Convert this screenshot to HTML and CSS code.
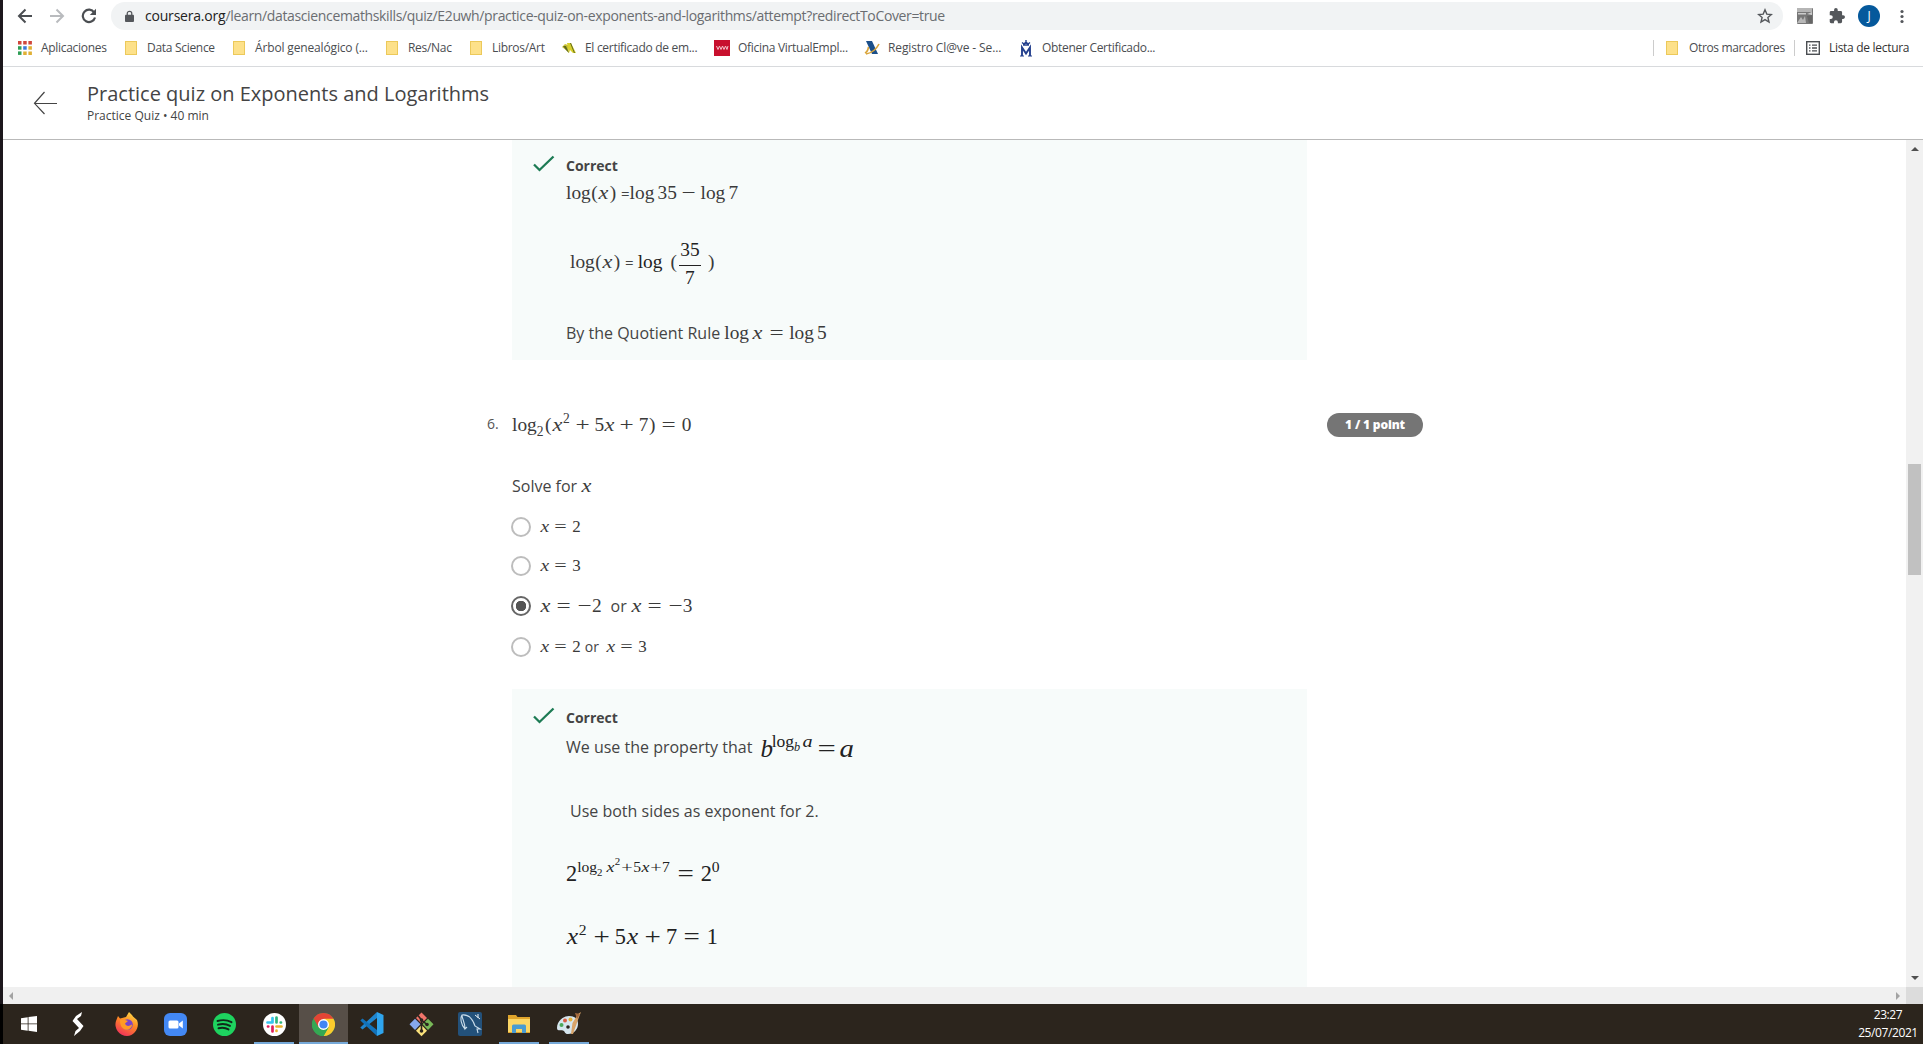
FILE: index.html
```html
<!DOCTYPE html>
<html lang="es">
<head>
<meta charset="utf-8">
<title>Practice quiz on Exponents and Logarithms</title>
<link rel="stylesheet" href="styles.css">
</head>
<body>
<div class="screen">
  <div class="browser">
    <div class="toolbar">
      <div class="nav">
        <svg width="16" height="16" viewBox="0 0 16 16" fill="none" stroke="#4b4e52" stroke-width="2"><path d="M15 8H2M8.500 1.500 2 8l6.500 6.500"/></svg>
        <svg width="16" height="16" viewBox="0 0 16 16" fill="none" stroke="#b9bbbe" stroke-width="2"><path d="M1 8h13M7.500 1.500 14 8l-6.500 6.500"/></svg>
        <svg width="16" height="16" viewBox="0 0 16 16"><path d="M13.200 4.500A6.200 6.200 0 1 0 14 9.500" fill="none" stroke="#4b4e52" stroke-width="2.200"/><path d="M15 .8v6.200H8.800z" fill="#4b4e52"/></svg>
      </div>
      <div class="omnibox">
        <svg class="lock" width="9" height="13" viewBox="0 0 10 13"><rect y="4.500" width="10" height="8" rx="1" fill="#54575b"/><path d="M2.500 5V3a2.500 2.300 0 0 1 5 0v2" fill="none" stroke="#54575b" stroke-width="1.400"/></svg>
        <span class="url"><b>coursera.org</b>/learn/datasciencemathskills/quiz/E2uwh/practice-quiz-on-exponents-and-logarithms/attempt?redirectToCover=true</span>
        <svg class="star" width="16" height="16" viewBox="0 0 16 16"><path d="m8 1.800 1.800 4.300 4.600.4-3.500 3 1.100 4.500L8 11.600 4 14l1.100-4.500-3.500-3 4.600-.4z" fill="none" stroke="#54575b" stroke-width="1.400"/></svg>
      </div>
      <div class="tools">
        <svg width="16" height="16" viewBox="0 0 16 16"><rect width="16" height="16" rx="1" fill="#777"/><path d="M0 0h15v4H0z" fill="#b5b5b5"/><path d="M1 5h8v1.500H1zM10 6l5-2v3z" fill="#ccc"/><path d="M0 15l4-6 2 3 2-4 1 7z" fill="#b8b8b8"/><path d="m10 8 5-1v8h-3z" fill="#666"/></svg>
        <svg width="16" height="16" viewBox="1 1 22 22"><path d="M20.500 11H19V7a2 2 0 0 0-2-2h-4V3.500a2.500 2.500 0 0 0-5 0V5H4a2 2 0 0 0-2 2v3.800h1.500a2.700 2.700 0 0 1 0 5.400H2V20a2 2 0 0 0 2 2h3.800v-1.500a2.700 2.700 0 0 1 5.400 0V22H17a2 2 0 0 0 2-2v-4h1.500a2.500 2.500 0 0 0 0-5z" fill="#54575b"/></svg>
        <span class="avatar">J</span>
        <svg width="4" height="16" viewBox="0 0 4 16" fill="#54575b"><circle cx="2" cy="3.500" r="1.600"/><circle cx="2" cy="8.500" r="1.600"/><circle cx="2" cy="13.500" r="1.600"/></svg>
      </div>
    </div>
    <div class="bookmarks">
      <div class="bm bm-apps"><span class="ic"><svg width="14" height="14" viewBox="0 0 14 14"><path d="M0 0h3.500v3.500H0zM5.200 0h3.500v3.500H5.200zM10.400 0h3.500v3.500h-3.500z" fill="#d0463b"/><path d="M0 5.200h3.500v3.500H0z" fill="#2e9e55"/><path d="M5.200 5.200h3.500v3.500H5.200z" fill="#3b79d8"/><path d="M10.400 5.200h3.500v3.500h-3.500z" fill="#e0b035"/><path d="M0 10.400h3.500v3.500H0z" fill="#2e9e55"/><path d="M5.200 10.400h3.500v3.500H5.200zM10.400 10.400h3.500v3.500h-3.500z" fill="#e0b035"/></svg></span><span>Aplicaciones</span></div>
      <div class="bm bm-data"><i class="folder"></i><span>Data Science</span></div>
      <div class="bm bm-tree"><i class="folder"></i><span>Árbol genealógico (...</span></div>
      <div class="bm bm-res"><i class="folder"></i><span>Res/Nac</span></div>
      <div class="bm bm-books"><i class="folder"></i><span>Libros/Art</span></div>
      <div class="bm bm-cert"><svg width="14" height="12" viewBox="0 0 14 12"><path d="M0 5 3 2l3 1 1 8-3-3z" fill="#c8c034"/><path d="m5 1 4 0 5 10-3 0-3-3-1 3z" fill="#d8cf2c"/><path d="m1 4 3 0 3 7-3-3zM8 1l1 0 4 10h-1z" fill="#5f6a1e"/></svg><span>El certificado de em...</span></div>
      <div class="bm bm-ofi"><svg width="16" height="16" viewBox="0 0 16 16"><path fill="#c8102e" d="M0 0h16v16H0z"/><path d="m2.500 6 1.500 3.500L5.500 6 7 9.500 8.500 6 10 9.500 11.500 6 13 9.500 14 6" fill="none" stroke="#f3c3ca"/></svg><span>Oficina VirtualEmpl...</span></div>
      <div class="bm bm-reg"><svg width="16" height="16" viewBox="0 0 16 16"><path d="M2 1h6l6 13H8z" fill="#1b4f8a"/><path d="M1 13c2-1 3-3 3.500-6M2 14c6-1 10-4 13-10" fill="none" stroke="#d9a43a" stroke-width="1.600"/></svg><span>Registro Cl@ve - Se...</span></div>
      <div class="bm bm-obt"><svg width="14" height="17" viewBox="0 0 14 17" fill="none" stroke="#24408e"><path d="M3 16V7.500l4 6 4-6V16" stroke-width="1.900"/><path d="M1 16h4M9 16h4" stroke-width="1.200"/><path d="M4 5h6M7 0v4M3 2.500 5 4l2-2 2 2 2-1.500" stroke-width="1.400"/></svg><span>Obtener Certificado...</span></div>
      <div class="bm bm-other"><i class="folder"></i><span>Otros marcadores</span></div>
      <div class="bm bm-list"><svg width="14" height="14" viewBox="0 0 14 14" fill="none" stroke="#4b4e52"><rect x=".7" y=".7" width="12.600" height="12.600" stroke-width="1.400"/><path d="M3 4.200h1.500M3 7h1.500M3 9.800h1.500M6 4.200h5M6 7h5M6 9.800h5" stroke-width="1.300"/></svg><span>Lista de lectura</span></div>
    </div>
    <header class="quizbar">
      <svg width="24" height="24" viewBox="0 0 24 24" fill="none" stroke="#444" stroke-width="1.200"><path d="M24 12.500H1.500M11.500 1 1.500 12.300 11.500 23"/></svg>
      <div>
        <h1>Practice quiz on Exponents and Logarithms</h1>
        <p>Practice Quiz • 40 min</p>
      </div>
    </header>
    <div class="viewport">
      <main>
        <section class="feedback first">
          <svg class="check" width="22" height="18" viewBox="0 0 22 18"><path d="m1 9.500 5.500 5.500L20.500 1.500" fill="none" stroke="#1d7b54" stroke-width="2.300"/></svg>
          <div class="answer">
            <h3>Correct</h3>
            <p class="ln"><span class="m">log<span class="p">(</span><i>x</i><span class="p">)</span></span> <span class="teq">=</span><span class="m">log<s></s>35<u>−</u>log<s></s>7</span></p>
            <p class="ln tall lead"><span class="m">log<span class="p">(</span><i>x</i><span class="p">)</span></span> <span class="teq">=</span> <span class="m dark">log</span><span class="m paren">(</span><span class="frac m dark"><span>35</span><span>7</span></span><span class="m close">)</span></p>
            <p class="ln quot">By the Quotient Rule <span class="m">log<s></s><i>x</i><b>=</b>log<s></s>5</span></p>
          </div>
        </section>
        <section class="question">
          <span class="num">6.</span>
          <div class="qbody">
            <p class="ln"><span class="m">log<sub>2</sub><span class="p">(</span><i>x</i><sup>2</sup><u>+</u>5<i>x</i><u>+</u>7<span class="p">)</span><b>=</b>0</span></p>
            <p class="ln solve">Solve for <span class="m"><i>x</i></span></p>
            <label class="opt"><span class="radio"></span><span class="m"><i>x</i><b>=</b>2</span></label>
            <label class="opt o2"><span class="radio"></span><span class="m"><i>x</i><b>=</b>3</span></label>
            <label class="opt o3 picked"><span class="radio"></span><span class="m"><i>x</i><b>=</b><em>−</em>2</span><span class="or">or</span><span class="m"><i>x</i><b>=</b><em>−</em>3</span></label>
            <label class="opt o4"><span class="radio"></span><span class="m"><i>x</i><b>=</b>2</span><span class="or">or</span><span class="m"><i>x</i><b>=</b>3</span></label>
          </div>
          <span class="pill">1 / 1 point</span>
        </section>
        <section class="feedback second">
          <svg class="check" width="22" height="18" viewBox="0 0 22 18"><path d="m1 9.500 5.500 5.500L20.500 1.500" fill="none" stroke="#1d7b54" stroke-width="2.300"/></svg>
          <div class="answer">
            <h3>Correct</h3>
            <p class="ln prop">We use the property that<span class="m big dark"><i class="b">b</i><sup>log<sub><i class="b">b</i></sub><s></s><i class="a">a</i></sup><b>=</b><i class="a">a</i></span></p>
            <p class="ln both lead">Use both sides as exponent for 2.</p>
            <p class="ln pow"><span class="m mid dark">2<sup>log<sub>2</sub><s></s><i>x</i><sup>2</sup><q>+</q>5<i>x</i><q>+</q>7</sup><b>=</b>2<sup>0</sup></span></p>
            <p class="ln poly"><span class="m mid dark"><i>x</i><sup>2</sup><u>+</u>5<i>x</i><u>+</u>7<b>=</b>1</span></p>
          </div>
        </section>
      </main>
      <div class="vscroll"><i class="up"></i><i class="thumb"></i><i class="down"></i></div>
    </div>
    <div class="hscroll"><i class="left"></i><i class="right"></i><span class="corner"></span></div>
  </div>
  <footer class="taskbar">
    <span class="app"><svg width="16" height="16" viewBox="0 0 16 16" fill="#fff"><path d="M0 2.200 6.700 1.200v6.300H0zM7.500 1.100 16 0v7.500H7.500zM0 8.300h6.700v6.400L0 13.800zM7.500 8.300H16V16l-8.500-1.200z"/></svg></span>
    <span class="app"><svg width="12" height="24" viewBox="0 0 12 24" fill="#fff"><path d="M10 0 9 4 5 7l6.500 7L8 19l-6 5 1.500-5L7 16 .5 9 4 4z"/></svg></span>
    <span class="app"><svg width="24" height="24" viewBox="0 0 24 24"><defs><linearGradient id="ff" x1=".8" y1="0" x2=".3" y2="1"><stop offset="0" stop-color="#ffe14a"/><stop offset=".45" stop-color="#ff8a24"/><stop offset="1" stop-color="#f0305b"/></linearGradient></defs><path d="M12 24A11.500 11.500 0 0 1 1 9l2-5 2 2.500 6-1.500L14 0l3 3 1 1.500L22 8c3 7-2 16-10 16z" fill="url(#ff)"/><circle cx="12.500" cy="12.500" r="5.300" fill="#7a45c9"/><path d="M5 8c3-1 5 0 8 1l-3 2.500c1 3 4 3 7 1 0 4-4 6-7 5s-5-4-5-9.500z" fill="#ff9b25"/></svg></span>
    <span class="app"><svg width="23" height="23" viewBox="0 0 23 23"><rect width="23" height="23" rx="6" fill="#4388f4"/><rect x="4.500" y="7.500" width="10" height="8" rx="1.500" fill="#fff"/><path d="m15 10.500 3.800-3v8l-3.800-3z" fill="#fff"/></svg></span>
    <span class="app"><svg width="23" height="23" viewBox="0 0 23 23"><circle cx="11.500" cy="11.500" r="11.500" fill="#1ed35f"/><path d="M4.500 8c5-1.500 10-1 14 1.200M5 11.700c4-1.200 8.500-.8 12 1.200M5.500 15.200c4-.9 7-.6 10 1.200" fill="none" stroke="#10291a" stroke-width="1.900" stroke-linecap="round"/></svg></span>
    <span class="app on"><svg width="23" height="23" viewBox="0 0 23 23"><circle cx="11.500" cy="11.500" r="11.500" fill="#fff"/><g stroke-width="2.700" stroke-linecap="round"><path d="M9.500 5v4.500M4.500 9.500h5" stroke="#36c5f0"/><path d="M13.500 4.500v5M18 9.500h-.3" stroke="#2eb67d"/><path d="M13.500 13.500h5M13.500 18v-.3" stroke="#ecb22e"/><path d="M9.500 13.500v5M5 13.500h.3" stroke="#e01e5a"/></g></svg></span>
    <span class="app active on"><svg width="23" height="23" viewBox="0 0 24 24"><circle cx="12" cy="12" r="12" fill="#34a853"/><path d="M12 12 1.600 6A12 12 0 0 1 22.400 6z" fill="#e34435"/><path d="M12 6h10.400A12 12 0 0 1 12 24l5.200-9z" fill="#fbcb2d"/><path d="M1.600 6 6.800 15 12 10z" fill="#e34435"/><path d="M1.600 6A12 12 0 0 0 12 24l5.200-9-5.200 2-5.200-2z" fill="#34a853"/><circle cx="12" cy="12" r="5.700" fill="#fff"/><circle cx="12" cy="12" r="4.300" fill="#4285f4"/></svg></span>
    <span class="app"><svg width="24" height="24" viewBox="0 0 24 24"><path d="M17 6 2.500 17.500.3 15.500 17 0z" fill="#1f86cf"/><path d="M17 18 2.500 6.500.3 8.500 17 24z" fill="#1272ba"/><path d="m17 0 6.500 3v18L17 24z" fill="#2fa5ee"/></svg></span>
    <span class="app"><svg width="25" height="25" viewBox="0 0 25 25"><path d="M12.500.5 18 6l-5.500 5.500L7 6z" fill="#f0746a"/><path d="m6 6.800 5.500 5.500L6 18 .5 12.300z" fill="#86a8ec"/><path d="m19 6.800 5.500 5.500L19 18l-5.500-5.700z" fill="#78b858"/><path d="m12.500 13 5.500 5.700-5.500 5.500L7 18.700z" fill="#fbe27c"/><path d="M9 3.500 12.500 8v12M12.500 8l6 5" stroke="#2b241e" stroke-width="1.600" fill="none"/><circle cx="12.500" cy="8" r="1.800" fill="#2b241e"/><circle cx="12.500" cy="19" r="1.800" fill="#2b241e"/><circle cx="18" cy="12.500" r="1.800" fill="#2b241e"/></svg></span>
    <span class="app"><svg width="24" height="24" viewBox="0 0 24 24"><rect width="24" height="24" rx="2" fill="#23517a"/><path d="M7 17C3 13 2 6 4 3c7-1 11 5 13 11l5 3-3 0 1 4M4 3c0 4 3 7 3 14l2-2" fill="none" stroke="#c9dcea" stroke-width="1.100"/><path d="m17 3 5 4M20 2v4" stroke="#e7f0f6"/></svg></span>
    <span class="app on"><svg width="22" height="20" viewBox="0 0 22 20"><path d="M0 1h8l1.500 2H22v16H0z" fill="#e0a52c"/><path d="M0 5h22v13H0z" fill="#fbd665"/><path d="M4 19v-7q0-1.500 1.500-1.500h11q1.500 0 1.500 1.500v7h-4v-4H8v4z" fill="#489bd2"/></svg></span>
    <span class="app on"><svg width="24" height="24" viewBox="0 0 24 24"><path d="M0 16C0 9 6 4 12 4s9 3 9 8-4 10-10 10c-3 0-3-2-4-3-2-2-7 1-7-3z" fill="#d6e6ee"/><circle cx="4.500" cy="13" r="2" fill="#4aa85b"/><circle cx="8" cy="8.500" r="2" fill="#d95d45"/><circle cx="13.500" cy="7.500" r="2" fill="#e6b23b"/><circle cx="11" cy="15" r="1.800" fill="#2b241e"/><path d="m14 22 1.500-11L21 2l3-2-2 5-6 17z" fill="#d8a368"/><path d="m18 1 5 1-3 5z" fill="#a2683c"/></svg></span>
    <div class="clock"><span>23:27</span><span>25/07/2021</span></div>
  </footer>
</div>
</body>
</html>
```
FILE: styles.css
```css
* { box-sizing: border-box; }
body { margin: 0; background: #fff; font-family: "Open Sans", "Noto Sans", sans-serif; color: #444; }
h1, h3, p { margin: 0; font-weight: 400; }
svg { display: block; flex: none; }
.screen { width: 1923px; height: 1044px; overflow: hidden; display: flex; flex-direction: column; }
.browser { height: 1004px; display: flex; flex-direction: column; border-left: 3px solid #1c171c; }

/* browser chrome */
.toolbar { height: 32px; display: flex; align-items: center; }
.nav { width: 108px; padding-left: 14px; display: flex; gap: 16px; }
.omnibox { width: 1672px; height: 28px; padding: 0 10px 0 14px; border-radius: 14px; background: #f1f3f4; display: flex; align-items: center; }
.url { margin-left: 11px; flex: 1; font-size: 14px; line-height: 28px; color: #6a6d71; white-space: nowrap; letter-spacing: -0.356px; }
.url b { font-weight: 400; color: #222; letter-spacing: -0.2px; }
.tools { flex: 1; padding-left: 14px; display: flex; align-items: center; }
.tools svg:nth-child(2) { margin-left: 16px; }
.avatar { width: 22px; height: 22px; margin: 0 20px 0 13px; border-radius: 50%; background: #05599c; color: #fff; font-size: 12px; line-height: 22px; text-align: center; }
.bookmarks { height: 35px; padding: 0 0 2px 15px; display: flex; align-items: center; border-bottom: 1px solid #d8dadd; font-size: 12px; color: #4a4d51; white-space: nowrap; }
.bm { height: 16px; display: flex; align-items: center; flex: none; letter-spacing: -0.3px; }
.bm span { line-height: 16px; }
.folder { width: 12px; height: 14px; background: #fde18a; border: 1px solid #ecc95a; flex: none; margin-right: 10px; }
.bm-apps { width: 107px; } .bm-apps .ic { width: 23px; }
.bm-data { width: 108px; } .bm-tree { width: 153px; letter-spacing: -0.15px; } .bm-res { width: 84px; } .bm-books { width: 92px; }
.bm-cert { width: 152px; } .bm-cert svg { margin-right: 9px; }
.bm-ofi { width: 150px; } .bm-ofi svg, .bm-reg svg { margin-right: 8px; }
.bm-reg { width: 155px; letter-spacing: -0.12px; } .bm-obt svg { margin-right: 9px; }
.bm-other { margin-left: auto; width: 141px; border-left: 1px solid #ccc; padding-left: 12px; }
.bm-other .folder { margin-right: 11px; }
.bm-other span { letter-spacing: -0.36px; }
.bm-list { width: 129px; border-left: 1px solid #ccc; padding-left: 11px; color: #333; }
.bm-list svg { margin-right: 9px; }

/* quiz header */
.quizbar { height: 73px; padding-left: 30px; display: flex; align-items: center; gap: 30px; border-bottom: 1px solid #b9b9b9; }
.quizbar h1 { font-size: 20px; line-height: 26px; white-space: nowrap; }
.quizbar p { font-size: 12px; line-height: 18px; }

/* page */
.viewport { height: 847px; display: flex; overflow: hidden; }
main { flex: 1; height: 847px; overflow: hidden; }
.feedback { width: 795px; margin-left: 509px; background: #f7fbfa; padding: 15px 0 0 21px; display: flex; gap: 11px; }
.first { height: 220px; }
.second { height: 400px; margin-top: 27px; padding-top: 18px; }
.feedback h3 { font-size: 14px; font-weight: 700; line-height: 20px; }
.answer { padding-top: 1px; }
.ln { height: 30px; line-height: 30px; font-size: 16px; white-space: nowrap; }
.answer .ln { margin-top: 2px; }
.answer .tall { height: 70px; line-height: 70px; margin-top: 19px; }
.answer .quot { margin-top: 21px; }
.lead { padding-left: 4px; }

/* math */
.m { font-family: "Liberation Serif", serif; font-size: 19.36px; line-height: 0; color: #3a3a3a; display: inline-block; }
.dark { color: #222; }
.m i { display: inline-block; width: .572em; text-align: center; transform: scaleX(1.15); }
.m i.a { width: .529em; } .m i.b { width: .45em; transform: none; }
.m .p { display: inline-block; width: .389em; text-align: center; }
.m b, .m u, .m em, .m q { display: inline-block; width: .778em; text-align: center; font-weight: 400; font-style: normal; text-decoration: none; transform: scaleX(1.3); }
.m b { margin: 0 .278em; } .m u { margin: 0 .222em; }
.m q { quotes: none; }
.m s { display: inline-block; width: .167em; }
.m sup, .m sub { font-size: .7em; line-height: 0; padding-right: .07em; }
.m sup { vertical-align: .59em; } .m sub { vertical-align: -.35em; }
.big { font-size: 25px; } .mid { font-size: 22.3px; }
.big b { margin: 0 .17em 0 .12em; }
.teq { font-size: 15px; }
.paren { margin-left: 8px; } .close { margin-left: 7px; }
.frac { display: inline-flex; flex-direction: column; width: 22px; margin-left: 2px; vertical-align: 12px; text-align: center; }
.frac span { line-height: 22px; height: 26px; } .frac span + span { border-top: 1px solid #222; line-height: 23px; height: 24px; }

/* question */
.question { margin: 50px 0 0 484px; display: flex; align-items: flex-start; }
.num { width: 25px; font-size: 14px; line-height: 28px; color: #555; }
.qbody { width: 795px; }
.solve { margin-top: 31px; }
.opt { height: 30px; margin: 11px 0 0 -1px; display: flex; align-items: baseline; line-height: 30px; }
.opt .m { font-size: 16.94px; line-height: 30px; }
.opt.o2 { margin-top: 9px; } .opt.o3 { margin-top: 10px; } .opt.o4 { margin-top: 11px; }
.opt.o3 .m { font-size: 19.36px; }
.radio { align-self: center; width: 20px; height: 20px; margin-right: 9px; border: 2px solid #bdbdbd; border-radius: 50%; }
.picked .radio { border-color: #666; background: radial-gradient(circle, #555 5px, #fff 5.500px); }
.or { font-size: 14px; margin: 0 7px 0 4px; }
.picked .or { font-size: 16px; margin: 0 4px 0 9px; }
.pill { width: 96px; height: 24px; margin: 3px 0 0 20px; border-radius: 12px; background: #757575; color: #fff; font-size: 12px; font-weight: 800; letter-spacing: -0.15px; line-height: 24px; text-align: center; }
.answer .prop { margin-top: 4px; } .prop .m { margin-left: 8px; vertical-align: -4px; }
.answer .both { margin-top: 34px; } .answer .pow { margin-top: 34px; } .answer .poly { margin-top: 33px; }

/* scrollbars */
.vscroll { width: 17px; background: #f1f1f1; display: flex; flex-direction: column; align-items: center; }
.up, .down { border: 4px solid transparent; border-top-width: 0; border-bottom-color: #505050; margin-top: 7px; }
.down { margin: auto 0 7px; transform: rotate(180deg); }
.thumb { width: 13px; height: 111px; margin-top: 313px; background: #c1c1c1; }
.hscroll { height: 17px; background: #f0f0f0; display: flex; align-items: center; padding-left: 6px; }
.left, .right { border: 4px solid transparent; border-left-width: 0; border-right-color: #a3a3a3; }
.right { margin: 0 6px 0 auto; transform: rotate(180deg); }
.corner { width: 17px; height: 17px; background: #dcdcdc; }

/* taskbar */
.taskbar { height: 40px; background: #2c251d; display: flex; border-left: 3px solid #000; padding-left: 1px; }
.app { width: 49.100px; height: 40px; display: flex; align-items: center; justify-content: center; }
.app.on { background: linear-gradient(#76a9d8, #76a9d8) center bottom / 40px 2px no-repeat; }
.app.active { background: linear-gradient(#76a9d8, #76a9d8) center bottom / 100% 2px no-repeat #574f48; }
.clock { margin-left: auto; width: 70px; padding-top: 2px; display: flex; flex-direction: column; align-items: center; color: #fff; font-size: 12px; line-height: 17.500px; letter-spacing: -0.4px; }
```
